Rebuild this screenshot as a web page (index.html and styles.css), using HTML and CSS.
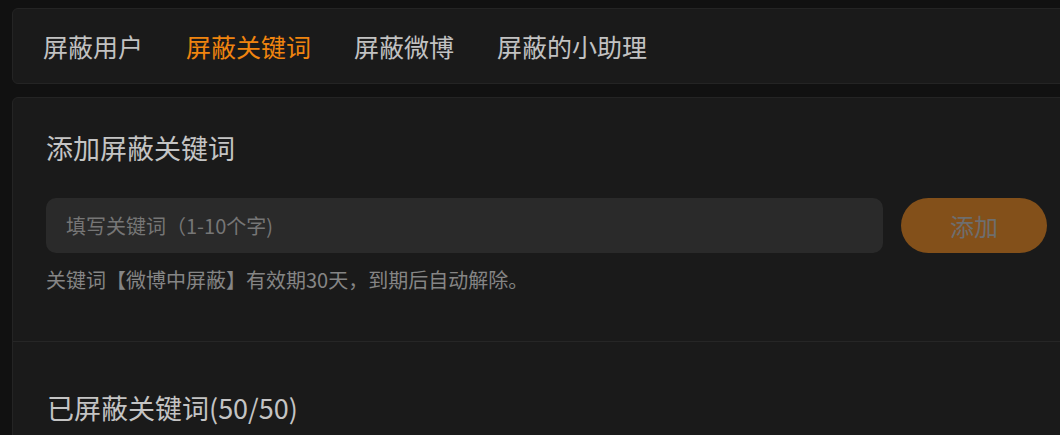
FILE: index.html
```html
<!DOCTYPE html>
<html lang="zh-CN">
<head>
<meta charset="utf-8">
<title>屏蔽关键词</title>
<link rel="stylesheet" href="styles.css">
</head>
<body>
<div class="page">
  <nav class="card tabs">
    <a class="tab">屏蔽用户</a>
    <a class="tab active">屏蔽关键词</a>
    <a class="tab">屏蔽微博</a>
    <a class="tab">屏蔽的小助理</a>
  </nav>
  <section class="card panel">
    <div class="add">
      <h2 class="title">添加屏蔽关键词</h2>
      <div class="form">
        <input class="input" type="text" placeholder="填写关键词（1-10个字)">
        <button class="btn" type="button">添加</button>
      </div>
      <p class="hint">关键词【微博中屏蔽】有效期30天，到期后自动解除。</p>
    </div>
    <div class="list">
      <h2 class="title">已屏蔽关键词(50/50)</h2>
    </div>
  </section>
</div>
</body>
</html>
```

FILE: styles.css
```css
html, body {
  margin: 0;
  padding: 0;
  background: #111111;
  overflow: hidden;
  height: 100%;
}
body {
  font-family: "Noto Sans CJK SC", "Noto Sans", sans-serif;
  color: #bdbdbd;
}
.page {
  width: 1069px;
  padding: 8px 0 0 12px;
  display: flex;
  flex-direction: column;
  gap: 13px;
}
.card {
  background: #1a1a1a;
  border: 1px solid #242424;
  border-radius: 6px;
}
.tabs {
  height: 74px;
  display: flex;
  align-items: center;
  gap: 43px;
  padding: 0 30px;
}
.tab {
  font-size: 25px;
  color: #c2c2c2;
  cursor: pointer;
  line-height: 1;
}
.tab.active {
  color: #f0840f;
}
.panel {
  display: flex;
  flex-direction: column;
}
.add {
  padding: 32px 33px 47px 33px;
  border-bottom: 1px solid #262626;
}
.title {
  margin: 0;
  font-size: 27px;
  font-weight: normal;
  color: #c4c4c4;
  line-height: 36px;
}
.form {
  display: flex;
  gap: 18px;
  margin-top: 32px;
}
.input {
  flex: 1;
  height: 55px;
  box-sizing: border-box;
  border: none;
  outline: none;
  background: #2a2a2a;
  border-radius: 10px;
  padding: 0 20px;
  font-family: inherit;
  font-size: 20px;
  color: #ccc;
}
.input::placeholder {
  color: #767676;
}
.btn {
  width: 146px;
  height: 55px;
  border: none;
  border-radius: 28px;
  background: #83501a;
  color: #6e6e6e;
  font-family: inherit;
  font-size: 24px;
}
.hint {
  margin: 13px 0 0;
  font-size: 20px;
  color: #858585;
  line-height: 28px;
}
.list {
  padding: 48px 34px 60px 34px;
}
```
